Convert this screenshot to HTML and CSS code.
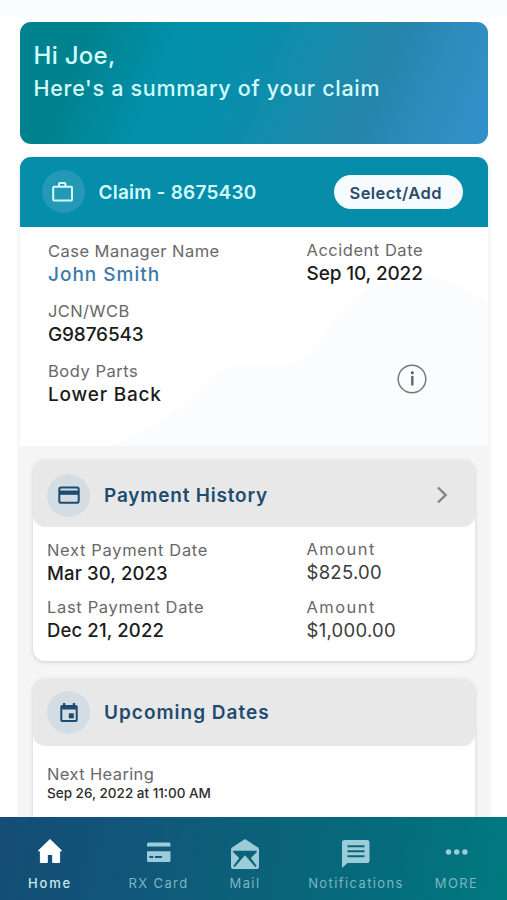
FILE: index.html
```html
<!DOCTYPE html>
<html lang="en">
<head>
<meta charset="utf-8">
<title>Claim summary</title>
<link rel="stylesheet" href="styles.css">
</head>
<body>
<main class="content">
  <header class="hero">
    <div class="hello">Hi Joe,</div>
    <div class="summary">Here's a summary of your claim</div>
  </header>
  <section class="claim">
    <div class="claim-head">
      <div class="disc disc-teal">
        <svg width="24" height="24" viewBox="0 0 24 24" fill="none" stroke="#d5ffff" stroke-width="2" stroke-linejoin="round"><rect x="2.2" y="6.8" width="18.8" height="13.6" rx="1"/><path d="M8 6.5V3.8Q8 3 8.800 3H13.600Q14.400 3 14.400 3.800V6.500"/></svg>
      </div>
      <h2 class="claim-title">Claim - 8675430</h2>
      <button class="select">Select/Add</button>
    </div>
    <div class="claim-body">
      <svg class="wave" viewBox="0 0 467 219" preserveAspectRatio="none"><path d="M90 219C145 199 166 174 191 150Q202 139 217 139H266C292 135 301 103 330 75C348 53 374 48 409 49Q438 53 467 77V219Z" fill="#fafcfe"/></svg>
      <div class="field"><div class="label s6">Case Manager Name</div><div class="value link s11">John Smith</div></div>
      <div class="field up"><div class="label s7">Accident Date</div><div class="value s0">Sep 10, 2022</div></div>
      <div class="field first"><div class="label s5">JCN/WCB</div><div class="value s1">G9876543</div></div>
      <div class="field first"><div class="label s7">Body Parts</div><div class="value s9">Lower Back</div></div>
      <svg class="info" width="32" height="32" viewBox="0 0 32 32"><circle cx="16" cy="16" r="13.800" fill="none" stroke="#777" stroke-width="1.500"/><circle cx="16.300" cy="9.800" r="1.500" fill="#555"/><path d="M16.300 13V22.500" stroke="#666" stroke-width="2.400"/></svg>
    </div>
    <div class="cards">
      <article class="card">
        <div class="card-head">
          <div class="disc"><svg width="24" height="24" viewBox="0 0 24 24"><rect x="2.300" y="4.500" width="19.400" height="15.200" rx="1.800" fill="none" stroke="#1d4c70" stroke-width="2"/><path d="M2.300 7.500H21.700V11.800H2.300Z" fill="#1d4c70"/></svg></div>
          <h3 class="card-title s9">Payment History</h3>
          <svg class="chevron" width="16" height="20" viewBox="0 0 16 20" fill="none" stroke="#858585" stroke-width="2.400"><path d="M4 2.500L11.600 10L4 17.500"/></svg>
        </div>
        <div class="card-body">
          <div class="field"><div class="label s8">Next Payment Date</div><div class="value small s3">Mar 30, 2023</div></div>
          <div class="field up"><div class="label s18">Amount</div><div class="value amount s4">$825.00</div></div>
          <div class="field"><div class="label s8">Last Payment Date</div><div class="value small s3">Dec 21, 2022</div></div>
          <div class="field"><div class="label s18">Amount</div><div class="value amount s4">$1,000.00</div></div>
        </div>
      </article>
      <article class="card">
        <div class="card-head upcoming-head">
          <div class="disc"><svg width="24" height="24" viewBox="0 0 24 24" fill="#1d4c70"><path fill-rule="evenodd" d="M5 4H6V2H8.200V4H15.800V2H18V4H19Q20.700 4 20.700 5.700V19.300Q20.700 21 19 21H5Q3.300 21 3.300 19.300V5.700Q3.300 4 5 4ZM5.300 8.500V19H18.700V8.500Z"/><rect x="11.800" y="12.300" width="5" height="5"/></svg></div>
          <h3 class="card-title s11">Upcoming Dates</h3>
        </div>
        <div class="card-body hearing">
          <div class="field"><div class="label s5">Next Hearing</div><div class="time">Sep 26, 2022 at 11:00 AM</div></div>
        </div>
      </article>
    </div>
  </section>
</main>
<nav class="tabs">
  <a class="tab active"><svg viewBox="0 0 30 32"><path d="M15 3.500L26.600 14.800H24.600V26.500H17.700V18.500H12.300V26.500H5.400V14.800H3.400Z" fill="currentColor" stroke="currentColor" stroke-linejoin="round"/></svg><span>Home</span></a>
  <a class="tab"><svg viewBox="0 0 30 32" fill="currentColor"><path d="M3 10.500V8Q3 6.500 4.500 6.500H25Q26.500 6.500 26.500 8V10.500Z"/><path fill-rule="evenodd" d="M3 15.300H26.500V24.500Q26.500 26 25 26H4.500Q3 26 3 24.500ZM5.300 20V22H9.300V20ZM11 20V22H18V20Z"/></svg><span>RX Card</span></a>
  <a class="tab"><svg viewBox="0 0 30 32" fill="currentColor"><path d="M15 3L28 11.500Q29 12.300 29 14V31Q29 33 27 33H3Q1 33 1 31V14Q1 12.300 2 11.500Z"/><path d="M3.300 14.800H26.700V16.300L20.800 22L26.700 30L25.300 31L15 19.300L4.700 31L3.300 30L9.200 22L3.300 16.300Z" fill="#0b617a"/></svg><span>Mail</span></a>
  <a class="tab"><svg viewBox="0 0 30 32"><path d="M3.500 4H26.500Q28.500 4 28.500 6.500V24.500Q28.500 27 26.500 27H6.500L1 32V6.500Q1 4 3.500 4Z" fill="currentColor"/><path d="M6.500 10.200H23.500M6.500 15.200H23.500M6.500 20.200H23.500" stroke="#08667c" stroke-width="2"/></svg><span>Notifications</span></a>
  <a class="tab"><svg viewBox="0 0 30 32" fill="currentColor"><circle cx="6.500" cy="16" r="2.700"/><circle cx="14.700" cy="16" r="2.700"/><circle cx="22.900" cy="16" r="2.700"/></svg><span>MORE</span></a>
</nav>
</body>
</html>
```
FILE: styles.css
```css
* { box-sizing: border-box; }
body {
  margin: 0;
  height: 900px;
  overflow: hidden;
  display: flex;
  flex-direction: column;
  background: linear-gradient(#fafbff 0, #fafbff 12px, #fefefe 17px);
  font-family: Inter, "Liberation Sans", sans-serif;
  white-space: nowrap;
}
h2, h3 { margin: 0; }
.content { height: 817px; padding: 22px 19px 0 20px; overflow: hidden; flex: none; }

.hero {
  height: 122px;
  border-radius: 11px;
  padding: 18px 13.500px;
  color: #d3fcff;
  background: linear-gradient(112deg, #00838f 0%, #00838f 15%, #0290aa 31%, #058fab 44%, #178cac 60%, #2584a9 74%, #2d8bbb 84%, #3391cb 100%);
}
.hello { font-size: 24px; line-height: 32px; font-weight: 500; letter-spacing: .3px; }
.summary { font-size: 21.500px; line-height: 32px; font-weight: 500; letter-spacing: .7px; }

.claim { margin-top: 12.500px; border-radius: 11px; box-shadow: 0 1px 4px rgba(0, 0, 0, .1); overflow: hidden; }
.claim-head {
  height: 70.500px;
  display: flex;
  align-items: center;
  padding: 0 25px 0 21.500px;
  background: #058daa;
}
.disc {
  width: 43px; height: 43px;
  border-radius: 50%;
  background: #d4dde3;
  display: flex;
  align-items: center;
  justify-content: center;
  flex: none;
}
.disc-teal { background: #2499b5; }
.claim-title { margin: 2px 0 0 14px; font-size: 19px; font-weight: 600; letter-spacing: .22px; color: #d3fcff; }
.select {
  margin-left: auto;
  width: 129.500px; height: 34.500px;
  border: 0;
  border-radius: 18px;
  padding: 2px 0 0;
  background: #f5fbff;
  color: #2b4c6b;
  font: 600 16.500px/32px Inter, sans-serif;
  letter-spacing: .42px;
  text-indent: -5px;
}
.claim-body {
  position: relative;
  height: 219px;
  padding: 13px 0 0 28px;
  background: #fff;
  display: grid;
  grid-template-columns: 258.500px 1fr;
  grid-auto-rows: 45px;
  row-gap: 15px;
}
.wave { position: absolute; inset: 0; width: 100%; height: 100%; }
.field { position: relative; }
.first { grid-column: 1; }
.up { margin-top: -1px; }
.info { position: relative; justify-self: start; margin: 3px 0 0 89px; }

.label { font-size: 16.500px; line-height: 23px; color: #686868; }
.value { font-size: 19px; line-height: 23px; font-weight: 500; color: #1c1c1c; }
.small { font-size: 18.500px; }
.amount { font-size: 18.500px; font-weight: 400; color: #3b3b3b; }
.link { color: #3a7bac; }
.time { font-size: 13.500px; line-height: 14px; font-weight: 500; letter-spacing: 0; color: #2d2d2d; }

.cards { background: #f5f5f5; padding: 14px 13.500px 0 12.500px; display: grid; gap: 18px; }
.card { background: #fff; border-radius: 12px; box-shadow: 0 1px 4px rgba(0, 0, 0, .16); height: 201px; }
.card-head {
  height: 67px;
  border-radius: 12px;
  background: #e8e8e8;
  display: flex;
  align-items: center;
  padding: 3px 25px 0 14.500px;
}
.upcoming-head { padding-top: 0; }
.card-title { margin-left: 14px; font-size: 19px; font-weight: 600; color: #1d4c70; }
.chevron { margin-left: auto; }
.card-body {
  padding: 12px 0 0 14.500px;
  display: grid;
  grid-template-columns: 259.500px 1fr;
  grid-auto-rows: 45px;
  row-gap: 12px;
}
.hearing { padding-top: 17px; }

.s0 { letter-spacing: -.14px; }
.s1 { letter-spacing: -.15px; }
.s3 { letter-spacing: .13px; }
.s4 { letter-spacing: .28px; }
.s5 { letter-spacing: .38px; }
.s6 { letter-spacing: .46px; }
.s7 { letter-spacing: .52px; }
.s8 { letter-spacing: .66px; }
.s9 { letter-spacing: .8px; }
.s11 { letter-spacing: 1px; }
.s18 { letter-spacing: 1.450px; }

.tabs {
  height: 83px;
  flex: none;
  display: grid;
  grid-template-columns: 100px 117px 56px 166px 35px;
  padding-top: 19px;
  background: linear-gradient(100deg, #144d73 0%, #12547a 22%, #0c6079 47%, #056c7c 75%, #00797f 100%);
}
.tab {
  display: flex;
  flex-direction: column;
  align-items: center;
  color: #9cccd7;
  font-size: 13px;
  line-height: 18px;
  letter-spacing: 1.400px;
}
.tab span { margin-top: 6px; color: #7bb6c3; }
.tab svg { width: 30px; height: 32px; overflow: visible; }
.active { color: #fff; font-weight: 500; letter-spacing: 1.800px; }
.active span { color: #c8e7ef; }
```
